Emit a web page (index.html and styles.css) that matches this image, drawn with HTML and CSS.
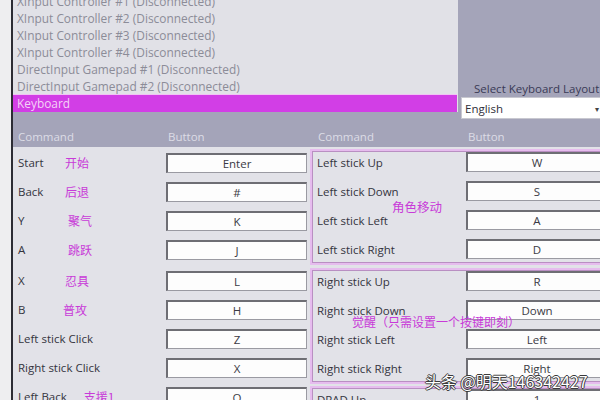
FILE: index.html
```html
<!DOCTYPE html>
<html lang="en">
<head>
    <meta charset="UTF-8">
    <meta name="viewport" content="width=device-width, initial-scale=1.0">
    <title>Controller Setup</title>
    <link rel="stylesheet" href="styles.css">
</head>
<body>
    <div class="frame">
        <div class="top">
            <ul class="devices">
                <li>XInput Controller #1 (Disconnected)</li>
                <li>XInput Controller #2 (Disconnected)</li>
                <li>XInput Controller #3 (Disconnected)</li>
                <li>XInput Controller #4 (Disconnected)</li>
                <li>DirectInput Gamepad #1 (Disconnected)</li>
                <li>DirectInput Gamepad #2 (Disconnected)</li>
                <li class="selected">Keyboard</li>
            </ul>
            <div class="picker">
                <div class="picker-label">Select Keyboard Layout</div>
                <div class="select"><span>English</span><span class="arrow">&#9662;</span></div>
            </div>
        </div>

        <div class="heads">
            <span>Command</span>
            <span>Button</span>
            <span>Command</span>
            <span>Button</span>
        </div>

        <div class="table">
            <div class="col left">
                <div class="row"><div class="cmd"><span class="name">Start</span><span class="note">开始</span></div><div class="key">Enter</div></div>
                <div class="row"><div class="cmd"><span class="name">Back</span><span class="note">后退</span></div><div class="key">#</div></div>
                <div class="row"><div class="cmd"><span class="name">Y</span><span class="note mid">聚气</span></div><div class="key">K</div></div>
                <div class="row"><div class="cmd"><span class="name">A</span><span class="note mid">跳跃</span></div><div class="key">J</div></div>
                <div class="row gap"><div class="cmd"><span class="name">X</span><span class="note">忍具</span></div><div class="key">L</div></div>
                <div class="row"><div class="cmd"><span class="name">B</span><span class="note back">普攻</span></div><div class="key">H</div></div>
                <div class="row"><div class="cmd"><span>Left stick Click</span></div><div class="key">Z</div></div>
                <div class="row"><div class="cmd"><span>Right stick Click</span></div><div class="key">X</div></div>
                <div class="row"><div class="cmd"><span>Left Back</span><span class="note far">支援1</span></div><div class="key">O</div></div>
            </div>

            <div class="col right">
                <div class="group">
                    <div class="row"><div class="cmd">Left stick Up</div><div class="key">W</div></div>
                    <div class="row"><div class="cmd">Left stick Down</div><div class="key">S</div></div>
                    <div class="row"><div class="cmd">Left stick Left</div><div class="key">A</div></div>
                    <div class="row"><div class="cmd">Left stick Right</div><div class="key">D</div></div>
                    <span class="tag move">角色移动</span>
                </div>
                <div class="group">
                    <div class="row"><div class="cmd">Right stick Up</div><div class="key">R</div></div>
                    <div class="row"><div class="cmd">Right stick Down</div><div class="key">Down</div></div>
                    <div class="row"><div class="cmd">Right stick Left</div><div class="key">Left</div></div>
                    <div class="row"><div class="cmd">Right stick Right</div><div class="key">Right</div></div>
                    <span class="tag awaken">觉醒（只需设置一个按键即刻）</span>
                </div>
                <div class="group">
                    <div class="row"><div class="cmd">DPAD Up</div><div class="key">1</div></div>
                </div>
            </div>
        </div>
    </div>

    <div class="watermark">头条 @明天146342427</div>
</body>
</html>
```

FILE: styles.css
```css
body {
    margin: 0;
    width: 600px;
    height: 400px;
    overflow: hidden;
    position: relative;
    background-color: #eeeef0;
    font-family: "Open Sans", "Noto Sans CJK SC", sans-serif;
    font-size: 11px;
    color: #34343e;
}

.frame {
    margin-left: 11px;
    height: 400px;
    border-left: 2px solid #2c2c34;
    background-color: #a4a4b9;
}

/* device list + layout picker */
.top {
    display: flex;
    height: 112px;
}

.devices {
    list-style: none;
    margin: 0;
    padding: 0;
    width: 445px;
    height: 112px;
    overflow: hidden;
    background-color: #e1e1e7;
    font-size: 11.9px;
}

.devices li {
    height: 17px;
    line-height: 17px;
    padding-left: 4px;
    color: #8c8c98;
    white-space: nowrap;
}

.devices li:first-child {
    margin-top: -7px;
}

.devices li.selected {
    margin-right: 1px;
    background-color: #d23ee6;
    color: #f4d2f6;
    box-shadow: 0 -1px 0 #f0c4f4;
}

.picker {
    flex: 1;
    display: flex;
    flex-direction: column;
    justify-content: flex-end;
    padding-left: 3px;
}

.picker-label {
    padding-left: 13px;
    margin-bottom: 1px;
    font-size: 11.5px;
    color: #3a3a56;
    white-space: nowrap;
}

.select {
    display: flex;
    justify-content: space-between;
    align-items: center;
    height: 20px;
    margin-bottom: -7px;
    padding-left: 3px;
    background-color: #ffffff;
    border: 1px solid #c8c8d0;
    border-right: none;
    font-size: 11.5px;
    color: #30303a;
}

.arrow {
    font-size: 8px;
    margin-right: 1px;
    color: #444;
}

/* column headers */
.heads {
    display: grid;
    grid-template-columns: 150px 150px 150px 1fr;
    height: 35px;
    padding: 17px 0 0 5px;
    box-sizing: border-box;
    font-size: 11.5px;
    color: #dcdce6;
}

/* bindings */
.table {
    display: grid;
    grid-template-columns: 297px 1fr;
    height: 253px;
    padding-top: 1px;
    background-color: #e2e2e8;
}

.row {
    display: grid;
    height: 29px;
    align-items: center;
    font-size: 11.5px;
}

.left .row {
    grid-template-columns: 148px 141px;
    padding-left: 5px;
}

.left .row.gap {
    margin-top: 2px;
}

.cmd {
    display: flex;
    align-items: center;
    white-space: nowrap;
}

.name {
    width: 47px;
}

.note {
    font-family: "Noto Sans CJK SC", sans-serif;
    font-size: 12px;
    color: #c83ad8;
}

.note.mid {
    margin-left: 3px;
}

.note.back {
    margin-left: -2px;
}

.note.far {
    margin-left: 17px;
}

.key {
    height: 20px;
    box-sizing: border-box;
    background-color: #fdfdfd;
    border: 1px solid #9a9aa2;
    border-top: 2px solid #6e6e74;
    border-left: 2px solid #6e6e74;
    text-align: center;
    line-height: 17px;
    color: #3a3a44;
}

.right .group {
    position: relative;
    padding: 0 0 0 7px;
    box-shadow: inset 0 0 0 2px #e6bcee, inset 0 0 0 3px #b98fc2;
}

.group:first-child {
    margin-top: 1px;
}

.group + .group {
    margin-top: 3px;
}

.group:last-child {
    margin-top: 2px;
}

.right .row {
    grid-template-columns: 149px 141px;
    align-items: start;
}

.right .row .cmd {
    height: 26px;
}

.right .row .key {
    margin-top: 3px;
}

.tag {
    position: absolute;
    font-family: "Noto Sans CJK SC", sans-serif;
    color: #c83ad8;
    white-space: nowrap;
}

.tag.move {
    left: 82px;
    top: 48px;
    font-size: 12.5px;
}

.tag.awaken {
    left: 42px;
    top: 45px;
    font-size: 12px;
}

.watermark {
    position: absolute;
    left: 425px;
    top: 369px;
    font-family: "Noto Sans CJK SC", sans-serif;
    font-size: 16px;
    color: #ffffff;
    white-space: nowrap;
    text-shadow: -1px 0 #3a3a3a, 1px 0 #3a3a3a, 0 -1px #3a3a3a, 0 1px #3a3a3a;
}
```
